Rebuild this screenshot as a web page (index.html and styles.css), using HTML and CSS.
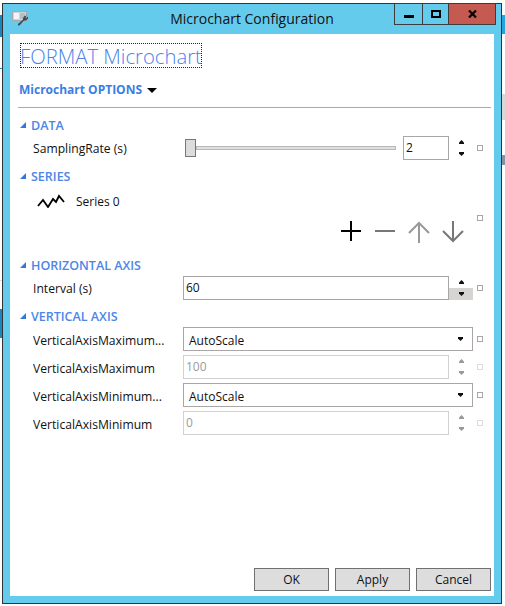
FILE: index.html
```html
<!DOCTYPE html>
<html lang="en">
<head>
<meta charset="utf-8">
<title>Microchart Configuration</title>
<link rel="stylesheet" href="styles.css">
</head>
<body>
<div class="window">
  <header class="titlebar">
    <svg class="app-icon" width="17" height="15" viewBox="0 0 17 15"><rect x="0.5" y="0.5" width="14" height="9" fill="#cfd5da" stroke="#a4a9ae"/><rect x="2" y="2" width="5" height="6" fill="#eef4f8"/><rect x="8" y="2" width="5" height="6" fill="#b4bec8"/><path d="M6 14.5 L7.5 14.5 L12 9.5 L14 9.5 L16 7.5 L16 5.5 L14.5 7 L13.5 6.5 L14.5 4.5 L12.5 5 L11 7 L11 8.5 L6 13Z" fill="#45484c"/></svg>
    <div class="title">Microchart Configuration</div>
    <div class="controls">
      <div class="ctl ctl-min"><span class="min-glyph"></span></div>
      <div class="ctl ctl-max"><span class="max-glyph"></span></div>
      <div class="ctl ctl-close"><svg width="9" height="8" viewBox="0 0 9 8"><path d="M1 0.5 L8 7.5 M8 0.5 L1 7.5" stroke="#000" stroke-width="2.2"/></svg></div>
    </div>
  </header>
  <main class="content">
    <div class="heading">FORMAT Microchart</div>
    <div class="options"><span>Microchart OPTIONS</span><i class="options-caret"></i></div>
    <hr class="rule">

    <div class="section"><i class="expander"></i>DATA</div>
    <div class="row">
      <label class="label">SamplingRate (s)</label>
      <div class="slider-wrap">
        <div class="thumb"></div>
        <div class="track"></div>
        <div class="box small-box">2</div>
      </div>
      <div class="spin"><b class="up"></b><b class="down"></b></div>
      <i class="mark"></i>
    </div>

    <div class="section"><i class="expander"></i>SERIES</div>
    <div class="series-item">
      <svg width="28" height="14" viewBox="0 0 28 14"><path d="M1 12 L6 6 L11 13 L16 5 L19 8 L22 2 L27 8" fill="none" stroke="#000" stroke-width="1.8"/></svg>
      <span>Series 0</span>
    </div>
    <div class="actions">
      <svg class="act" width="20" height="20" viewBox="0 0 20 20"><path d="M0 10 H20 M10 0 V20" stroke="#000" stroke-width="2"/></svg>
      <svg class="act act-minus" width="20" height="20" viewBox="0 0 20 20"><path d="M0 10 H20" stroke="#777" stroke-width="2"/></svg>
      <svg class="act act-up" width="22" height="22" viewBox="0 0 22 22"><path d="M11 22 V2 M1 12 L11 2 L21 12" fill="none" stroke="#999" stroke-width="2"/></svg>
      <svg class="act act-down" width="22" height="22" viewBox="0 0 22 22"><path d="M11 0 V20 M1 10 L11 20 L21 10" fill="none" stroke="#777" stroke-width="2"/></svg>
      <i class="mark mark-top"></i>
    </div>

    <div class="section"><i class="expander"></i>HORIZONTAL AXIS</div>
    <div class="row">
      <label class="label">Interval (s)</label>
      <div class="box wide-box">60</div>
      <div class="spin spin-active"><b class="up"></b><b class="down"></b></div>
      <i class="mark"></i>
    </div>

    <div class="section"><i class="expander"></i>VERTICAL AXIS</div>
    <div class="row row-tight">
      <label class="label label-low">VerticalAxisMaximum...</label>
      <div class="combo"><span>AutoScale</span><b class="down"></b></div>
      <i class="mark"></i>
    </div>
    <div class="row row-tight">
      <label class="label label-low">VerticalAxisMaximum</label>
      <div class="box wide-box is-disabled">100</div>
      <div class="spin spin-off"><b class="up"></b><b class="down"></b></div>
      <i class="mark mark-off"></i>
    </div>
    <div class="row row-tight">
      <label class="label label-low">VerticalAxisMinimum...</label>
      <div class="combo"><span>AutoScale</span><b class="down"></b></div>
      <i class="mark"></i>
    </div>
    <div class="row">
      <label class="label label-low">VerticalAxisMinimum</label>
      <div class="box wide-box is-disabled">0</div>
      <div class="spin spin-off"><b class="up"></b><b class="down"></b></div>
      <i class="mark mark-off"></i>
    </div>

    <footer class="footer">
      <button class="btn">OK</button>
      <button class="btn">Apply</button>
      <button class="btn">Cancel</button>
    </footer>
  </main>
</div>
</body>
</html>
```

FILE: styles.css
```css
* { box-sizing: border-box; }
html, body { margin: 0; height: 100%; }
body {
  background-color: #fff;
  background-repeat: no-repeat;
  background-image:
    linear-gradient(#1b86bd, #1b86bd),
    linear-gradient(#2f8fd0, #2f8fd0),
    linear-gradient(#1b86bd, #1b86bd),
    linear-gradient(#ddd, #ddd),
    linear-gradient(#28a4dd, #28a4dd),
    linear-gradient(#d8d8d8, #d8d8d8),
    linear-gradient(#8890a8, #8890a8);
  background-size: 2px 22px, 2px 1px, 2px 29px, 2px 1px, 3px 19px, 3px 26px, 3px 10px;
  background-position: 0 15px, 0 68px, 0 309px, 0 280px, 502px 15px, 502px 94px, 502px 155px;
  font-family: "Open Sans", "Noto Sans", sans-serif;
  font-size: 12px;
  color: #111;
  padding: 3px 3px 2px 2px;
  overflow: hidden;
}
.window {
  height: 601px;
  background: #65cbec;
  border: 1px solid #333;
  display: flex;
  flex-direction: column;
  padding: 0 7px 7px 7px;
}
.titlebar {
  height: 30px;
  flex: none;
  display: flex;
  align-items: flex-start;
  position: relative;
}
.app-icon { margin: 7px 0 0 2px; }
.title {
  position: absolute;
  left: 0; right: 0; top: 5px;
  text-align: center;
  font-size: 14px;
  color: #111;
}
.controls {
  position: absolute;
  right: -2px; top: -1px;
  display: flex;
  height: 22px;
  border: 1px solid #3c3c3c;
}
.ctl { display: flex; align-items: center; justify-content: center; }
.ctl-min { width: 28px; border-right: 1px solid #3c3c3c; }
.ctl-max { width: 26px; border-right: 1px solid #3c3c3c; }
.ctl-close { width: 46px; background: #c45a50; }
.min-glyph { width: 10px; height: 3px; background: #000; margin-top: 4px; }
.max-glyph { width: 10px; height: 8px; border: 2px solid #000; }

.content {
  flex: 1;
  background: #fff;
  display: flex;
  flex-direction: column;
  padding: 9px 3px 5px 8px;
  min-height: 0;
}
.heading {
  width: 182px;
  height: 25px;
  margin-left: 2px;
  border: 1px dotted #222;
  font-size: 20.3px;
  font-weight: 300;
  line-height: 25px;
  color: #4c83ea;
  white-space: nowrap;
  margin-bottom: 13px;
  text-indent: -1px;
}
.options {
  height: 18px;
  display: flex;
  align-items: center;
  color: #3a7de6;
  font-weight: 700;
  font-size: 12px;
  line-height: 18px;
  padding-left: 1px;
}
.options-caret {
  width: 0; height: 0;
  margin-left: 5px;
  border: 5px solid transparent;
  border-top: 5px solid #000;
  border-bottom: 0;
}
.rule { margin: 8px 0 8px 0; border: 0; height: 1px; background: #aca8a8; flex: none; }
.section {
  height: 18px;
  flex: none;
  display: flex;
  align-items: center;
  gap: 5px;
  margin: 0 0 2px 2px;
  color: #4c86e8;
  font-weight: 600;
  font-size: 12.5px;
}
.expander {
  width: 0; height: 0;
  border-left: 6px solid transparent;
  border-bottom: 6px solid #2f78e0;
}
.row {
  height: 24px;
  flex: none;
  display: flex;
  align-items: center;
  margin-bottom: 7px;
  padding-left: 15px;
}
.row-tight { margin-bottom: 4px; }
.label { width: 150px; flex: none; white-space: nowrap; overflow: hidden; font-size: 12.15px; }
.label-low { padding-top: 2px; }
.box {
  height: 24px;
  border: 1px solid #aba6a6;
  line-height: 22px;
  padding-left: 2px;
  background: #fff;
}
.wide-box { width: 266px; }
.small-box { width: 46px; margin-left: 7px; }
.is-disabled { border-color: #d0d0d0; color: #9a9a9a; }
.slider-wrap { width: 266px; display: flex; align-items: center; }
.thumb { width: 11px; height: 18px; background: #dcdcdc; border: 1px solid #777; flex: none; margin-left: 2px; }
.track { width: 200px; height: 4px; background: #e0e0e0; border: 1px solid #b8b8b8; flex: none; }
.spin {
  width: 24px;
  height: 24px;
  flex: none;
  display: flex;
  flex-direction: column;
  align-items: stretch;
}
.spin b, .combo b { display: block; position: relative; }
.spin b { flex: 1; }
.up::after, .down::after {
  content: "";
  position: absolute;
  left: 50%;
  margin-left: -2px;
  top: 50%;
  width: 5px;
  height: 4px;
  margin-top: -2px;
  background: #111;
}
.up::after { clip-path: polygon(50% 0, 100% 60%, 100% 100%, 0 100%, 0 60%); }
.down::after { clip-path: polygon(0 0, 100% 0, 100% 40%, 50% 100%, 0 40%); }
.spin-off .up::after, .spin-off .down::after { background: #9a9a9a; }
.spin-active .down { background: #d6d3d3; }
.mark {
  width: 6px; height: 6px;
  border: 1px solid #aba6a6;
  margin-left: 4px;
  flex: none;
}
.mark-off { border-color: #dcdcdc; }
.series-item {
  height: 18px;
  flex: none;
  display: flex;
  align-items: center;
  padding-left: 19px;
  gap: 11px;
  margin-top: 5px;
}
.actions {
  height: 33px;
  flex: none;
  margin-top: 3px;
  position: relative;
  display: flex;
  align-items: flex-start;
  padding: 8px 0 0 323px;
  margin-bottom: 10px;
}
.act { flex: none; }
.act-minus { margin-left: 14px; }
.act-up { margin-left: 13px; }
.act-down { margin-left: 12px; }
.mark-top { position: absolute; left: 459px; top: 2px; margin: 0; }
.combo {
  width: 290px;
  height: 24px;
  flex: none;
  border: 1px solid #aba6a6;
  display: flex;
  align-items: center;
  justify-content: space-between;
  padding: 2px 0 0 5px;
}
.combo b { width: 24px; height: 22px; margin-top: -2px; }
.footer {
  margin-top: auto;
  display: flex;
  justify-content: flex-end;
  gap: 6px;
}
.btn {
  width: 75px;
  height: 23px;
  background: #dddddd;
  border: 1px solid #707070;
  font: inherit;
  color: #111;
  padding: 0;
}
```
